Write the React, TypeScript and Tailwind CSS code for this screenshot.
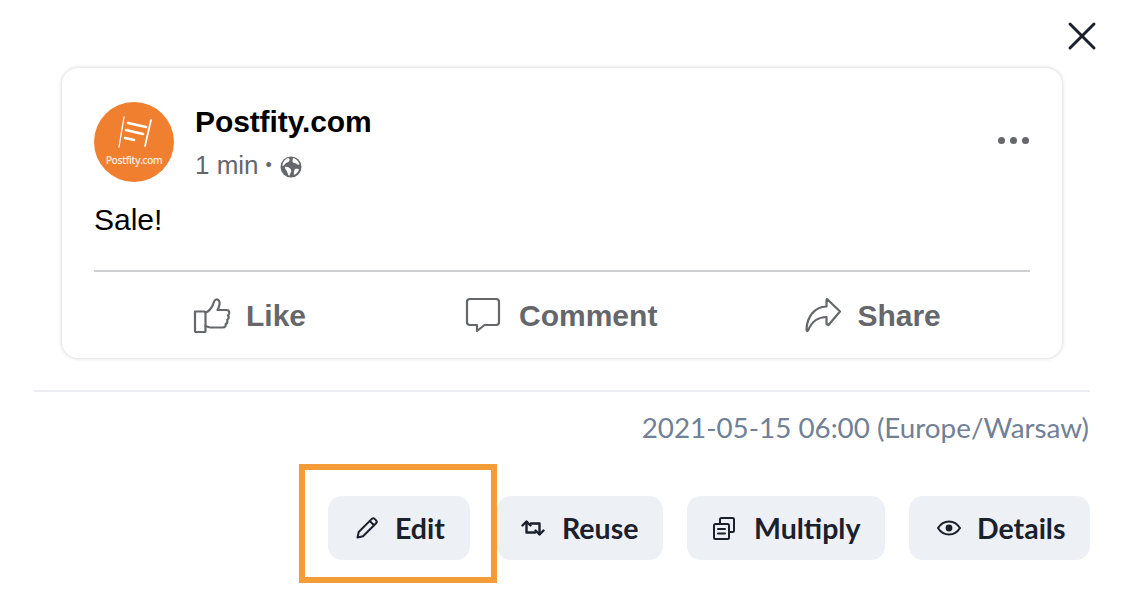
import { X } from 'lucide-react';

function ThumbIcon() {
  return (
    <svg width="38" height="36" viewBox="0 0 38 36" fill="none" stroke="#65676b" strokeWidth="2.2" strokeLinejoin="round" strokeLinecap="round">
      <path d="M2 14.500h9.500a1 1 0 0 1 1 1V34a1 1 0 0 1-1 1H3a1 1 0 0 1-1-1z" />
      <path d="M12.500 15.500c3-1 6-4.500 7.500-8 .8-2 1-4.500 3-5 2.500-.5 4 2 3.500 5-.3 2-1.200 4-2 5.500h9c2 0 3 1.500 2.700 3.200-.2 1-.8 1.800-1.200 2.300.8 1 .9 3-.8 4.500.5 1.500 0 3.200-1.500 4 .3 2-.8 3.500-3 3.500H18c-2 0-3.500-.8-5.500-1.500" />
    </svg>
  );
}

function CommentIcon() {
  return (
    <svg width="36" height="36" viewBox="0 0 36 36" className="-ml-[1px]" fill="none" stroke="#65676b" strokeWidth="2.2" strokeLinejoin="round" strokeLinecap="round">
      <path d="M5 2h26a3 3 0 0 1 3 3v20a3 3 0 0 1-3 3H19.500l-7.500 6v-6H5a3 3 0 0 1-3-3V5a3 3 0 0 1 3-3z" />
    </svg>
  );
}

function ShareIcon() {
  return (
    <svg width="36" height="36" viewBox="0 0 36 36" fill="none" stroke="#65676b" strokeWidth="2.2" strokeLinejoin="round" strokeLinecap="round">
      <path d="M22 2 35 14.500 23.500 28l-2-1v-7c-8 0-14 3-18.500 13.500-1 1-1.500 0-1.500-1C2 20 9 10 21.500 9.500V3z" />
    </svg>
  );
}

function PostfityLogo() {
  return (
    <div className="w-[80px] h-[80px] rounded-full bg-[#f07f30] shrink-0 flex flex-col items-center">
      <svg width="36" height="34" viewBox="0 0 36 34" className="mt-[14px] ml-[2px]" stroke="#fff" fill="none" strokeLinecap="round">
        <path d="M7 1 2 31" strokeWidth="1.300" />
        <path d="M34 4 28 30" strokeWidth="1.800" />
        <path d="M11 7l18 4" strokeWidth="2.600" />
        <path d="M9 14l17 4" strokeWidth="2.600" />
        <path d="M8 22l9 2" strokeWidth="2.600" />
      </svg>
      <span className="text-[10.5px] leading-[14px] text-[#fde9da] mt-[3px] tracking-[-0.55px] font-semibold font-['Open_Sans',sans-serif]">Postfity.com</span>
    </div>
  );
}

function GlobeIcon() {
  return (
    <svg width="22" height="22" viewBox="0 0 22 22" className="ml-[8px] mt-[3px]">
      <circle cx="11" cy="11" r="10.500" fill="#65676b" />
      <path d="M2.500 10c1.500 0 2-2 3.500-3 1.500-1 3-1 3.500-2.500C10 3 9 2 8 2 5 3 2.500 6 2.500 10z" fill="#fff" />
      <path d="M13 2c3 .8 5.500 3 6.500 6-.5 1.500-2 .5-3-.3-1.500-.7-3.500-.7-4-2.200-.3-1.500.5-2.500.5-3.500zM5 11c2-.5 4 .5 5.500 2 1 1 1 3 0 4-.5 1-1 2.500-1.500 3-1.500-2-1.500-4-2.500-5.500C5.500 13.500 5 12.500 5 11z" fill="#fff" />
      <path d="M15 13c1.500-.5 3.500-.5 4 .5-.8 2.500-2.500 4.500-5 5.500-.5-2 0-4.500 1-6z" fill="#fff" />
    </svg>
  );
}

function PencilIcon() {
  return (
    <svg width="24" height="24" viewBox="0 0 24 24" fill="none" stroke="#1a202c" strokeWidth="2" strokeLinejoin="round" strokeLinecap="round">
      <path d="M2.500 21.500 3.700 16 16.800 2.900a2 2 0 0 1 2.800 0l1.500 1.500a2 2 0 0 1 0 2.800L8 20.300z" />
      <path d="M14.800 5l4.200 4.200" />
    </svg>
  );
}

function ReuseIcon() {
  return (
    <svg width="24" height="24" viewBox="0 0 24 24" fill="none" stroke="#1a202c" strokeWidth="2.400" strokeLinejoin="round" strokeLinecap="round">
      <path d="M1.500 9.500 5.500 5.500l4 4" />
      <path d="M5.500 6v10.500H14" />
      <path d="M22.500 14.500l-4 4-4-4" />
      <path d="M18.500 18V7.500H10" />
    </svg>
  );
}

function MultiplyIcon() {
  return (
    <svg width="24" height="24" viewBox="0 0 24 24" fill="none" stroke="#1a202c" strokeWidth="2" strokeLinejoin="round" strokeLinecap="round">
      <path d="M8 7V3.500A1.500 1.500 0 0 1 9.500 2h11A1.500 1.500 0 0 1 22 3.500v11a1.500 1.500 0 0 1-1.500 1.500H17" />
      <rect x="2" y="8" width="15" height="15" rx="1.500" />
      <path d="M6 13h7M6 17.500h7" />
    </svg>
  );
}

function EyeIcon() {
  return (
    <svg width="24" height="24" viewBox="0 0 24 24" fill="none" stroke="#1a202c" strokeWidth="2" strokeLinejoin="round">
      <path d="M1 12c2.500-4 6.500-6.500 11-6.500S20.500 8 23 12c-2.500 4-6.500 6.500-11 6.500S3.500 16 1 12z" />
      <circle cx="12" cy="12" r="3.400" fill="#1a202c" stroke="none" />
    </svg>
  );
}

function PostAction({ icon, label, className }: { icon: React.ReactNode; label: string; className: string }) {
  return (
    <div className={`flex items-center ${className}`}>
      {icon}
      <span className="text-[30px] leading-[36px] font-bold text-[#65676b] pt-[1px]">{label}</span>
    </div>
  );
}

function ActionButton({ icon, label, className = '' }: { icon: React.ReactNode; label: string; className?: string }) {
  return (
    <button
      type="button"
      className={`h-[64px] rounded-[14px] bg-[#edf0f5] flex items-center text-[28.5px] font-bold text-[#1a202c] font-['Lato',sans-serif] ${className}`}
    >
      {icon}
      {label}
    </button>
  );
}

export default function App() {
  return (
    <div className="relative w-[1122px] h-[592px] bg-white overflow-hidden font-['Liberation_Sans',sans-serif]">
      <div className="flex justify-end pt-[12px] pr-[16px] h-[68px]">
        <X size={48} strokeWidth={1.500} className="text-[#1a202c]" />
      </div>

      <div className="ml-[62px] w-[1000px] h-[290px] rounded-[16px] bg-white shadow-[0_0_4px_rgba(0,0,0,0.2)] px-[32px] pt-[34px]">
        <div className="flex items-start">
          <PostfityLogo />
          <div className="ml-[21px] flex-1">
            <div className="text-[30px] leading-[36px] font-bold text-black mt-[2px] tracking-[-0.1px]">Postfity.com</div>
            <div className="flex items-center text-[26px] leading-[32px] text-[#65676b] mt-[9px]">
              1 min <span className="ml-[7px] text-[18px]">•</span>
              <GlobeIcon />
            </div>
          </div>
          <div className="flex gap-[5px] mt-[35px] mr-[1px]">
            <span className="w-[7px] h-[7px] rounded-full bg-[#65676b]" />
            <span className="w-[7px] h-[7px] rounded-full bg-[#65676b]" />
            <span className="w-[7px] h-[7px] rounded-full bg-[#65676b]" />
          </div>
        </div>
        <p className="text-[30px] leading-[34px] text-black mt-[21px]">Sale!</p>
        <div className="h-[2px] bg-[#cfd0d2] mt-[33px]" />
        <div className="h-[86px]">
          <div className="flex items-center h-full">
            <PostAction icon={<ThumbIcon />} label="Like" className="ml-[99px] gap-[15px]" />
            <PostAction icon={<CommentIcon />} label="Comment" className="ml-[160px] gap-[18px]" />
            <PostAction icon={<ShareIcon />} label="Share" className="ml-[148px] gap-[16px]" />
          </div>
        </div>
      </div>

      <div className="ml-[34px] mr-[32px] h-[2px] bg-[#eceef1] mt-[32px]" />

      <div className="text-right pr-[33px] mt-[18px] text-[27.8px] leading-[36px] text-[#718096] font-['Lato',sans-serif]">
        2021-05-15 06:00 (Europe/Warsaw)
      </div>

      <div className="flex justify-end pr-[32px] mt-[50px]">
        <ActionButton icon={<PencilIcon />} label="Edit" className="w-[142px] pl-[27px] gap-[16px] mr-[27px]" />
        <ActionButton icon={<ReuseIcon />} label="Reuse" className="w-[166px] pl-[24px] gap-[17px] mr-[24px]" />
        <ActionButton icon={<MultiplyIcon />} label="Multiply" className="w-[198px] pl-[25px] gap-[18px] mr-[24px]" />
        <ActionButton icon={<EyeIcon />} label="Details" className="w-[181px] pl-[28px] gap-[16px]" />
      </div>

      {/* highlight around the edit button */}
      <div className="absolute left-[299px] top-[464px] w-[198px] h-[119px] border-[6px] border-[#f39c38]" />
    </div>
  );
}
